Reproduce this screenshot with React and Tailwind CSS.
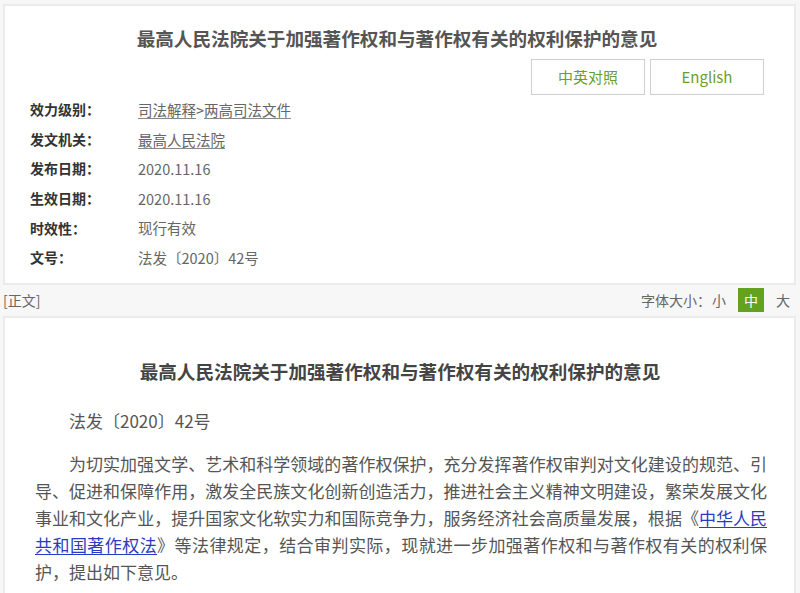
const meta = [
  { label: '效力级别：', links: ['司法解释', '两高司法文件'] },
  { label: '发文机关：', links: ['最高人民法院'] },
  { label: '发布日期：', text: '2020.11.16' },
  { label: '生效日期：', text: '2020.11.16' },
  { label: '时效性：', text: '现行有效' },
  { label: '文号：', text: '法发〔2020〕42号' },
]

const title = '最高人民法院关于加强著作权和与著作权有关的权利保护的意见'

export default function App() {
  return (
    <div className="min-h-[593px] w-[800px] overflow-hidden bg-[#f7f7f7] pt-[4px] font-['Noto_Sans_CJK_SC','Noto_Sans',sans-serif] text-[#555]">
      {/* --- INFO PANEL --- */}
      <div className="ml-[3px] w-[793px] border-2 border-[#ebebeb] bg-white pb-[10px] pl-[25px] pr-[30px] pt-[18px]">
        <h1 className="text-center text-[18.6px] font-bold leading-[28px] text-[#555]">{title}</h1>
        <div className="mt-[7px] flex justify-end gap-[5px]">
          <button className="h-[36px] w-[114px] border border-[#cfcfcf] bg-white text-[15px] text-[#6b9e2a]">
            中英对照
          </button>
          <button className="h-[36px] w-[114px] border border-[#cfcfcf] bg-white text-[15px] text-[#6b9e2a]">
            English
          </button>
        </div>
        <div>
          {meta.map((m) => (
            <div key={m.label} className="flex h-[29.6px] items-center text-[14px]">
              <span className="w-[108px] font-bold text-[#333]">{m.label}</span>
              {m.links ? (
                <span className="text-[14.5px] text-[#666]">
                  {m.links.map((l, i) => (
                    <span key={l}>
                      {i > 0 && '>'}
                      <a className="underline decoration-[#888] underline-offset-2">{l}</a>
                    </span>
                  ))}
                </span>
              ) : (
                <span className="text-[14.5px] text-[#666]">{m.text}</span>
              )}
            </div>
          ))}
        </div>
      </div>

      {/* --- STRIP --- */}
      <div className="flex h-[31px] items-center justify-between pl-[3px] pr-[10px] text-[14px] text-[#666]">
        <span>[正文]</span>
        <div className="flex items-center">
          <span className="mr-[1px]">字体大小：</span>
          <span className="mr-[12px]">小</span>
          <span className="flex h-[24px] w-[26px] items-center justify-center bg-[#63a21f] text-white">中</span>
          <span className="ml-[12px]">大</span>
        </div>
      </div>

      {/* --- BODY --- */}
      <div className="ml-[3px] h-[300px] w-[793px] border-2 border-b-0 border-[#ebebeb] bg-white pl-[30px] pt-[39px]">
        <h2 className="w-[730px] text-center text-[18.6px] font-bold leading-[28px] text-[#444]">{title}</h2>
        <div className="mt-[22px] w-[732px] text-justify text-[17px] leading-[27px] text-[#555]">
          <p className="indent-[34px]">法发〔2020〕42号</p>
          <p className="mt-[16px] indent-[34px]">
            为切实加强文学、艺术和科学领域的著作权保护，充分发挥著作权审判对文化建设的规范、引导、促进和保障作用，激发全民族文化创新创造活力，推进社会主义精神文明建设，繁荣发展文化事业和文化产业，提升国家文化软实力和国际竞争力，服务经济社会高质量发展，根据《<a className="text-[#2b3cc4] underline underline-offset-2">中华人民共和国著作权法</a>》等法律规定，结合审判实际，现就进一步加强著作权和与著作权有关的权利保护，提出如下意见。
          </p>
        </div>
      </div>
    </div>
  )
}
